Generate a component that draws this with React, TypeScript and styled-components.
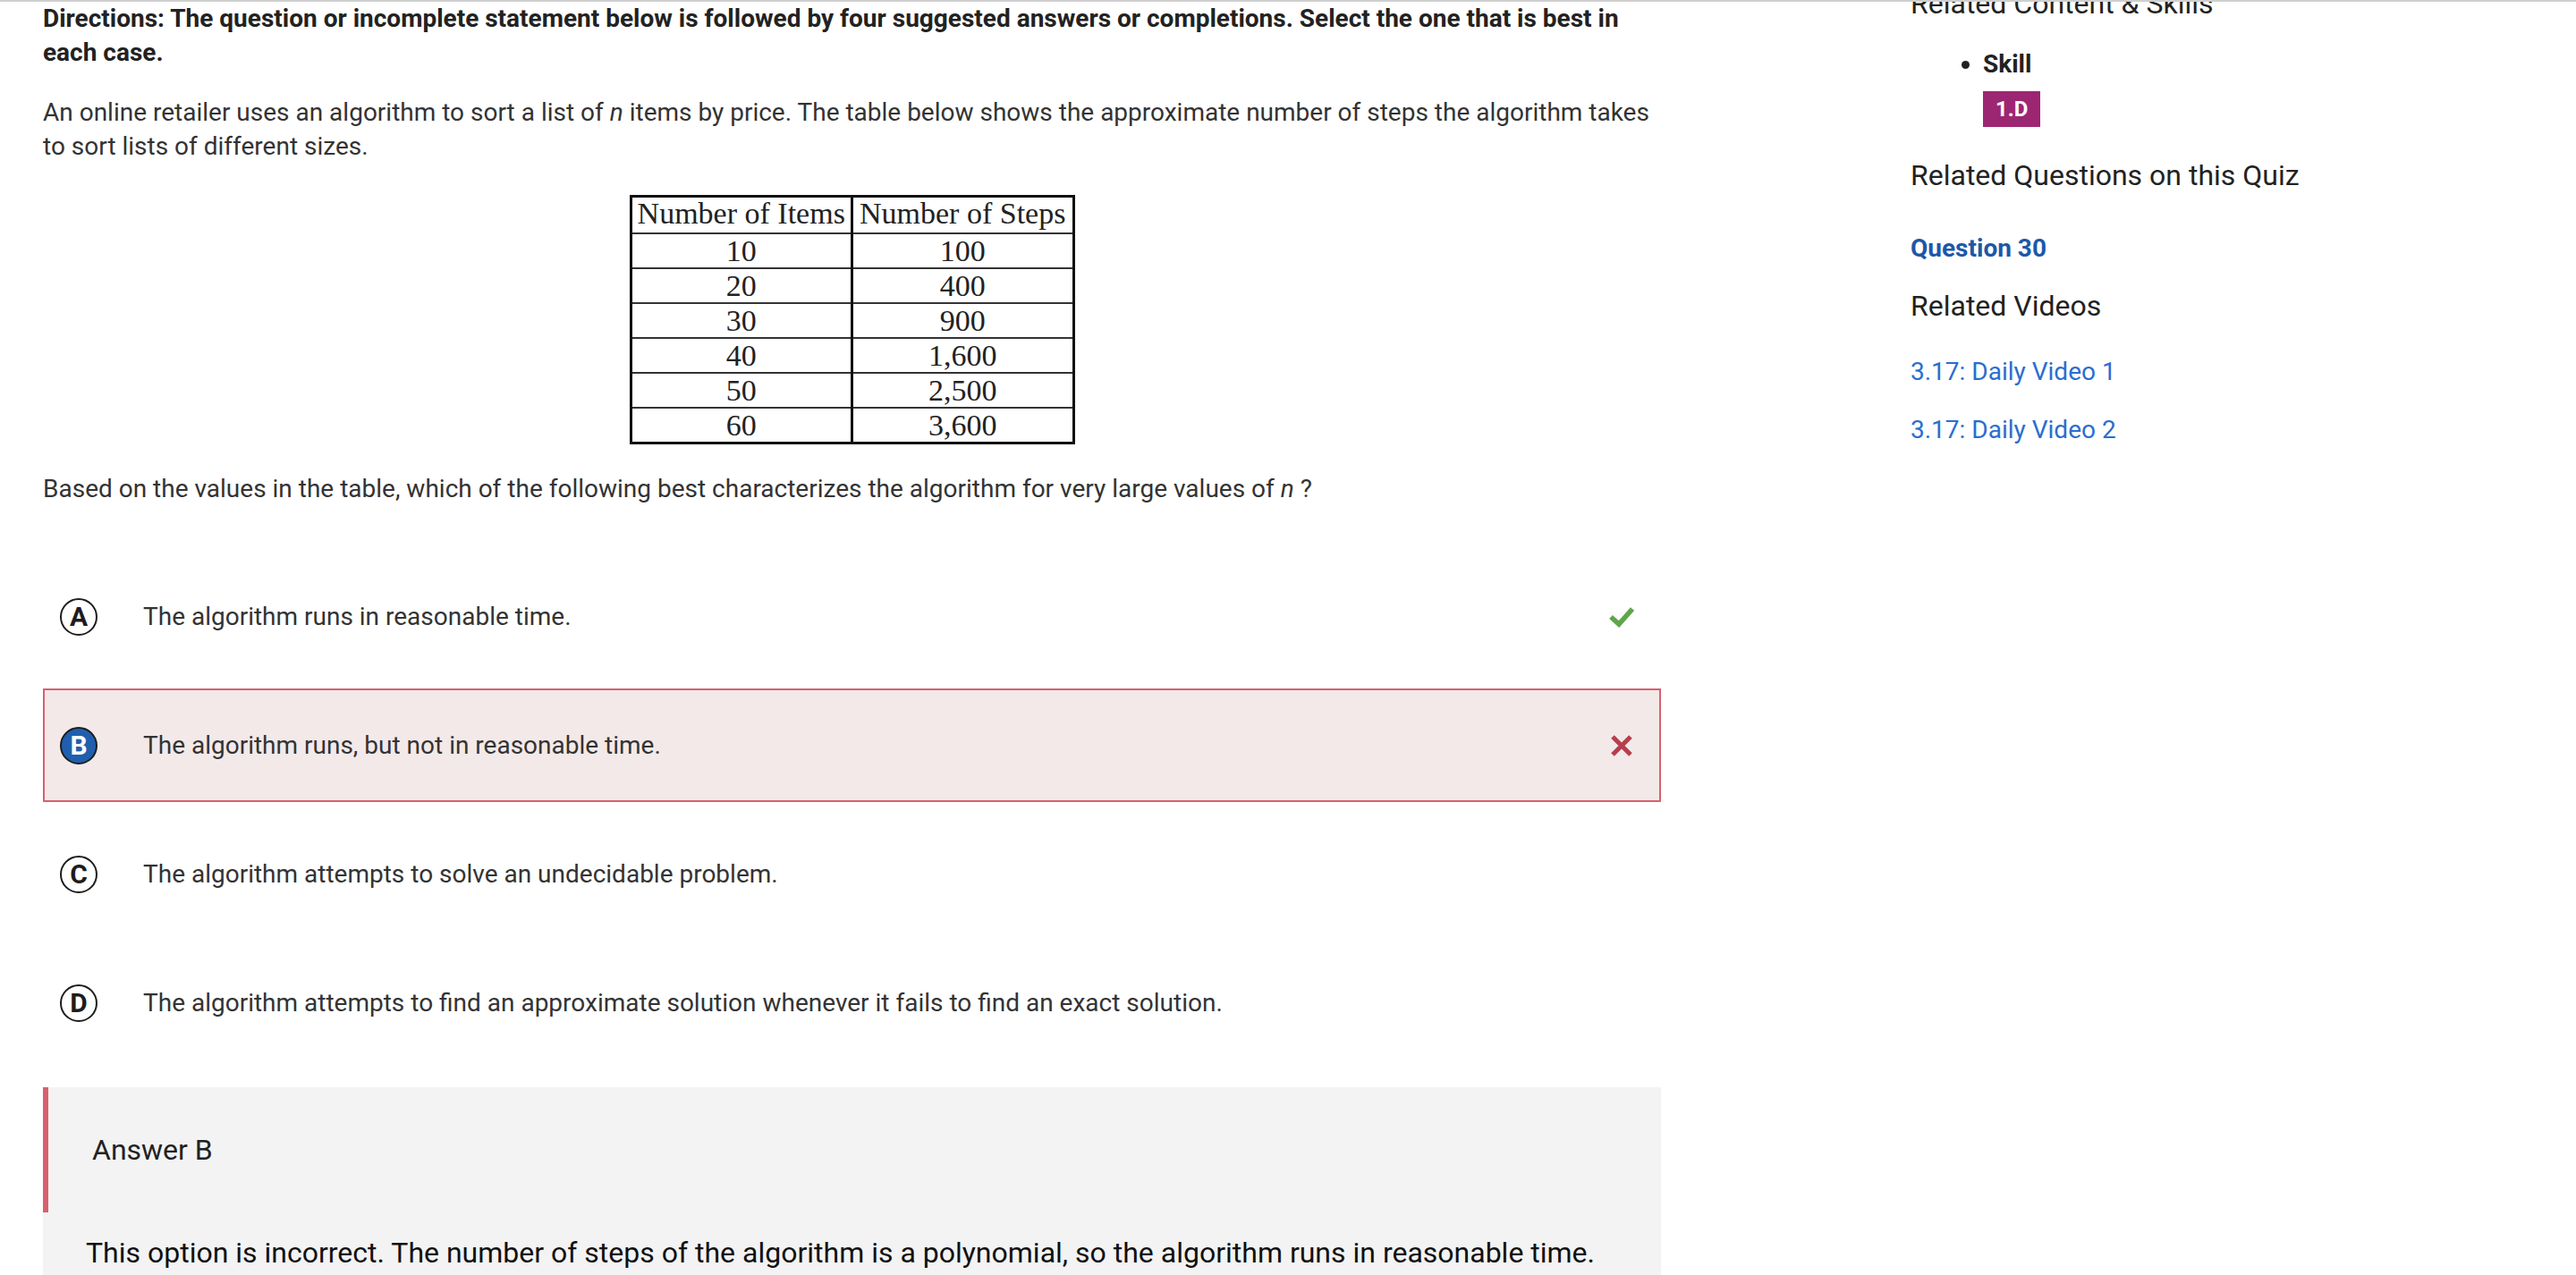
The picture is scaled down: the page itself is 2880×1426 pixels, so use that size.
import React from "react";
import styled, { createGlobalStyle } from "styled-components";

const GlobalStyle = createGlobalStyle`
  html, body {
    margin: 0;
    padding: 0;
    background: #fff;
  }
  body {
    font-family: Roboto, "Noto Sans", "Liberation Sans", sans-serif;
    color: #222;
    overflow: hidden;
  }
`;

const Page = styled.div`
  display: flex;
  height: 1426px;
  box-sizing: border-box;
  border-top: 2px solid #cfcfcf;
  padding-left: 48px;
  overflow: hidden;
`;

const Main = styled.main`
  width: 1809px;
  flex: none;
`;

const Directions = styled.p`
  margin: 0;
  font-size: 28px;
  line-height: 38px;
  font-weight: 700;
  color: #222;
`;

const Para = styled.p<{ $top: number }>`
  margin: ${(p) => p.$top}px 0 0;
  font-size: 28px;
  line-height: 38px;
  color: #333;
`;

const Figure = styled.div`
  display: flex;
  justify-content: center;
  margin-top: 35px;
`;

const Table = styled.table`
  width: 498px;
  border-collapse: collapse;
  border: 3px solid #111;
  font-family: "Liberation Serif", "Times New Roman", serif;
  font-size: 34px;
  color: #222;
  text-align: center;
`;

const Cell = styled.td<{ $head?: boolean }>`
  width: 50%;
  height: ${(p) => (p.$head ? 39 : 37)}px;
  padding: 0;
  line-height: ${(p) => (p.$head ? 36 : 37)}px;
  vertical-align: ${(p) => (p.$head ? "top" : "middle")};
  white-space: nowrap;
  border-top: 2px solid #333;
  border-bottom: 2px solid #333;
  border-left: 3px solid #111;
  border-right: 3px solid #111;
`;

const Options = styled.div`
  display: flex;
  flex-direction: column;
  gap: 17px;
  margin-top: 60px;
`;

const Option = styled.div<{ $wrong?: boolean }>`
  display: flex;
  align-items: center;
  height: 127px;
  box-sizing: border-box;
  padding: 0 28px 0 17px;
  border: 2px solid ${(p) => (p.$wrong ? "#d8606d" : "transparent")};
  background: ${(p) => (p.$wrong ? "#f3e9e9" : "transparent")};
`;

const Letter = styled.span<{ $picked?: boolean }>`
  display: inline-flex;
  align-items: center;
  justify-content: center;
  width: 42px;
  height: 42px;
  box-sizing: border-box;
  flex: none;
  border-radius: 50%;
  border: 2px solid #1d1d1d;
  background: ${(p) => (p.$picked ? "#1f5fae" : "#fff")};
  color: ${(p) => (p.$picked ? "#fff" : "#1d1d1d")};
  font-size: 30px;
  font-weight: 700;
  line-height: 1;
`;

const OptionText = styled.span`
  flex: 1;
  margin-left: 51px;
  font-size: 28px;
  line-height: 38px;
  color: #333;
`;

const Mark = styled.svg`
  flex: none;
  width: 28px;
  height: 26px;
`;

const Explanation = styled.section`
  margin-top: 31px;
  background: #f3f3f3;
  height: 260px;
`;

const ExplainHead = styled.div`
  display: flex;
  align-items: center;
  height: 140px;
  box-sizing: border-box;
  border-left: 6px solid #d9606d;
  padding-left: 49px;
  font-size: 32px;
  color: #222;
`;

const ExplainBody = styled.p`
  margin: 0;
  padding: 23px 0 0 48px;
  font-size: 32px;
  line-height: 44px;
  color: #111;
`;

const Sidebar = styled.aside`
  flex: 1;
  margin-left: 279px;
  overflow: hidden;
`;

const SideHeading = styled.h3<{ $top: number }>`
  margin: ${(p) => p.$top}px 0 0;
  font-size: 32px;
  line-height: 40px;
  font-weight: 400;
  color: #222;
`;

const SkillList = styled.ul`
  margin: 28px 0 0;
  padding: 0 0 0 81px;
  font-size: 28px;
  line-height: 40px;
`;

const SkillItem = styled.li`
  font-weight: 700;
  color: #222;
`;

const Badge = styled.span`
  display: inline-flex;
  align-items: center;
  height: 40px;
  margin-top: 10px;
  padding: 0 14px;
  background: #9d2673;
  color: #fff;
  font-size: 24px;
  font-weight: 700;
`;

const SideLink = styled.a<{ $top: number; $bold?: boolean }>`
  display: block;
  margin-top: ${(p) => p.$top}px;
  font-size: 28px;
  line-height: 40px;
  font-weight: ${(p) => (p.$bold ? 700 : 400)};
  color: ${(p) => (p.$bold ? "#1d58a8" : "#2a6dcf")};
  text-decoration: none;
`;

const rows: [string, string][] = [
  ["10", "100"],
  ["20", "400"],
  ["30", "900"],
  ["40", "1,600"],
  ["50", "2,500"],
  ["60", "3,600"],
];

const choices = [
  { key: "A", text: "The algorithm runs in reasonable time.", mark: "right" },
  { key: "B", text: "The algorithm runs, but not in reasonable time.", mark: "wrong" },
  { key: "C", text: "The algorithm attempts to solve an undecidable problem." },
  {
    key: "D",
    text: "The algorithm attempts to find an approximate solution whenever it fails to find an exact solution.",
  },
];

function Check() {
  return (
    <Mark viewBox="0 0 28 26">
      <polyline
        points="2,13 11,21 26,4"
        fill="none"
        stroke="#5fa54a"
        strokeWidth="5.5"
      />
    </Mark>
  );
}

function Cross() {
  return (
    <Mark viewBox="0 0 28 26">
      <path
        d="M4 3 L24 23 M24 3 L4 23"
        fill="none"
        stroke="#b73e4d"
        strokeWidth="5"
      />
    </Mark>
  );
}

export default function App() {
  return (
    <>
      <GlobalStyle />
      <Page>
        <Main>
          <Directions>
            Directions: The question or incomplete statement below is followed by four
            suggested answers or completions. Select the one that is best in each case.
          </Directions>
          <Para $top={29}>
            An online retailer uses an algorithm to sort a list of <i>n</i> items by
            price. The table below shows the approximate number of steps the algorithm
            takes to sort lists of different sizes.
          </Para>
          <Figure>
            <Table>
              <tbody>
                <tr>
                  <Cell $head>Number of Items</Cell>
                  <Cell $head>Number of Steps</Cell>
                </tr>
                {rows.map(([items, steps]) => (
                  <tr key={items}>
                    <Cell>{items}</Cell>
                    <Cell>{steps}</Cell>
                  </tr>
                ))}
              </tbody>
            </Table>
          </Figure>
          <Para $top={31}>
            Based on the values in the table, which of the following best characterizes
            the algorithm for very large values of <i>n</i> ?
          </Para>
          <Options>
            {choices.map((c) => (
              <Option key={c.key} $wrong={c.mark === "wrong"}>
                <Letter $picked={c.key === "B"}>{c.key}</Letter>
                <OptionText>{c.text}</OptionText>
                {c.mark === "right" && <Check />}
                {c.mark === "wrong" && <Cross />}
              </Option>
            ))}
          </Options>
          <Explanation>
            <ExplainHead>Answer B</ExplainHead>
            <ExplainBody>
              This option is incorrect. The number of steps of the algorithm is a
              polynomial, so the algorithm runs in reasonable time.
            </ExplainBody>
          </Explanation>
        </Main>
        <Sidebar>
          <SideHeading $top={-18}>Related Content &amp; Skills</SideHeading>
          <SkillList>
            <SkillItem>
              Skill
              <br />
              <Badge>1.D</Badge>
            </SkillItem>
          </SkillList>
          <SideHeading $top={34}>Related Questions on this Quiz</SideHeading>
          <SideLink href="#" $top={42} $bold>
            Question 30
          </SideLink>
          <SideHeading $top={24}>Related Videos</SideHeading>
          <SideLink href="#" $top={34}>
            3.17: Daily Video 1
          </SideLink>
          <SideLink href="#" $top={25}>
            3.17: Daily Video 2
          </SideLink>
        </Sidebar>
      </Page>
    </>
  );
}
